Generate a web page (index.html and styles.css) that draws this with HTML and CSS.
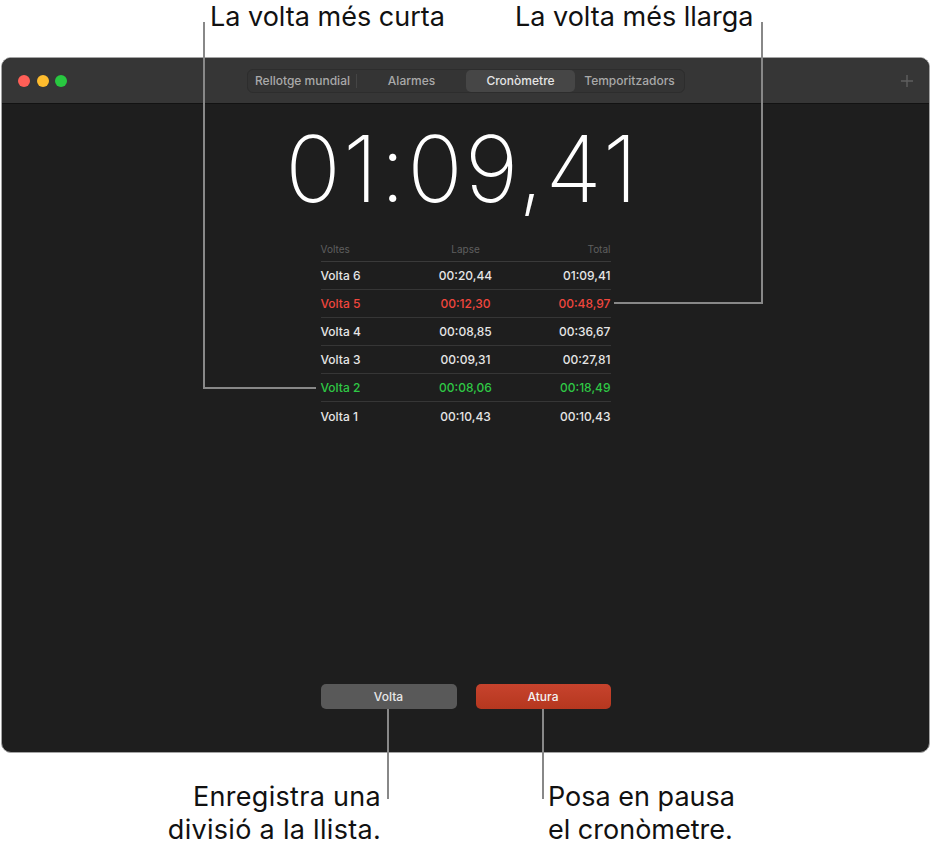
FILE: index.html
```html
<!DOCTYPE html>
<html lang="ca">
<head>
<meta charset="utf-8">
<title>Cronòmetre</title>
<link rel="stylesheet" href="styles.css">
</head>
<body>
<div class="stage">
  <div class="window">
    <header class="titlebar">
      <div class="lights">
        <span class="light red"></span>
        <span class="light yellow"></span>
        <span class="light green"></span>
      </div>
      <nav class="segmented">
        <span class="seg">Rellotge mundial</span>
        <span class="seg sep-after">Alarmes</span>
        <span class="seg active">Cronòmetre</span>
        <span class="seg">Temporitzadors</span>
      </nav>
      <div class="tools">
        <svg class="plus" width="14" height="14" viewBox="0 0 14 14"><path d="M7 1v12M1 7h12" stroke="#5f5f5f" stroke-width="1.4" fill="none"/></svg>
      </div>
    </header>
    <main class="content">
      <div class="time">01:09,41</div>
      <div class="laps">
        <div class="row head"><span>Voltes</span><span>Lapse</span><span>Total</span></div>
        <div class="row"><span>Volta 6</span><span>00:20,44</span><span>01:09,41</span></div>
        <div class="row longest"><span>Volta 5</span><span>00:12,30</span><span>00:48,97</span></div>
        <div class="row"><span>Volta 4</span><span>00:08,85</span><span>00:36,67</span></div>
        <div class="row"><span>Volta 3</span><span>00:09,31</span><span>00:27,81</span></div>
        <div class="row shortest"><span>Volta 2</span><span>00:08,06</span><span>00:18,49</span></div>
        <div class="row last"><span>Volta 1</span><span>00:10,43</span><span>00:10,43</span></div>
      </div>
      <div class="buttons">
        <button class="btn lap">Volta</button>
        <button class="btn stop">Atura</button>
      </div>
    </main>
  </div>

  <div class="label top-left">La volta més curta</div>
  <div class="label top-right">La volta més llarga</div>
  <div class="leader leader-short"></div>
  <div class="leader leader-long"></div>
  <div class="leader leader-lap"></div>
  <div class="leader leader-stop"></div>
  <div class="label bottom-left">Enregistra una<br>divisió a la llista.</div>
  <div class="label bottom-right">Posa en pausa<br>el cronòmetre.</div>
</div>
</body>
</html>
```

FILE: styles.css
```css
* { box-sizing: border-box; }
html, body { margin: 0; padding: 0; background: #ffffff; }
body { font-family: Inter, "Noto Sans", sans-serif; }

.stage {
  position: relative;
  width: 931px;
  height: 857px;
  overflow: hidden;
  padding-top: 57px;
  padding-left: 1px;
}

.window {
  width: 929px;
  height: 696px;
  border: 1px solid #a4a4a4;
  border-radius: 10px;
  overflow: hidden;
  background: #1e1e1e;
  display: flex;
  flex-direction: column;
}

.titlebar {
  height: 46px;
  flex: none;
  background: #363636;
  border-bottom: 1px solid #121212;
  display: grid;
  grid-template-columns: 1fr auto 1fr;
  align-items: center;
  padding: 0 15px 0 16px;
}

.lights { display: flex; gap: 6.5px; }
.light { width: 12px; height: 12px; border-radius: 50%; display: block; }
.red { background: #ff5f57; }
.yellow { background: #febc2e; }
.green { background: #28c840; }

.segmented {
  display: flex;
  width: 438px;
  height: 24px;
  border: 1px solid #2d2d2d;
  border-radius: 6px;
  background: #343434;
  padding: 0;
}
.seg {
  flex: 1;
  display: flex;
  align-items: center;
  justify-content: center;
  font-size: 12px;
  color: #a9a9a9;
  font-weight: 500;
  border-radius: 5px;
  position: relative;
}
.seg:first-child::after {
  content: "";
  position: absolute;
  right: 0;
  top: 4px;
  bottom: 4px;
  width: 1px;
  background: #454545;
}
.seg.active {
  background: #464646;
  color: #e4e4e4;
}

.tools { display: flex; justify-content: flex-end; }
.plus { display: block; }

.content {
  flex: 1;
  display: flex;
  flex-direction: column;
  align-items: center;
  padding: 19px 0 43px;
}

.time {
  font-size: 92px;
  line-height: 92px;
  height: 92px;
  font-weight: 200;
  color: #ffffff;
  letter-spacing: 2px;
  margin-right: 6px;
}

.laps {
  width: 290px;
  margin-top: 21px;
}
.row {
  display: grid;
  grid-template-columns: 1fr 1fr 1fr;
  height: 28px;
  align-items: center;
  border-bottom: 1px solid #363636;
  font-size: 12px;
  font-weight: 500;
  color: #e6e6e6;
}
.row span:nth-child(2) { text-align: center; }
.row span:nth-child(3) { text-align: right; }
.row.head {
  height: 26px;
  font-size: 10px;
  font-weight: 400;
  color: #5e5e5e;
  border-bottom-color: #3a3a3a;
}
.row.last { border-bottom: none; }
.row.longest { color: #f0463d; }
.row.shortest { color: #2fc845; }

.buttons {
  margin-top: auto;
  display: flex;
  gap: 19px;
}
.btn {
  height: 25px;
  border: none;
  border-radius: 5px;
  font-family: Inter, "Noto Sans", sans-serif;
  font-size: 12px;
  font-weight: 500;
  color: #e8e8e8;
  padding: 0;
}
.btn.lap { width: 136px; background: #595959; }
.btn.stop { width: 135px; background: linear-gradient(#c7432d, #b5371f); color: #f2f2f2; }

.label {
  position: absolute;
  font-family: Inter, "Noto Sans", sans-serif;
  font-size: 27px;
  line-height: 33px;
  color: #111111;
  white-space: nowrap;
}
.top-left { left: 210px; top: 0px; }
.top-right { left: 515px; top: 0px; }
.bottom-left { right: 550px; top: 780px; text-align: right; letter-spacing: 0.3px; }
.bottom-right { left: 548px; top: 780px; }

.leader { position: absolute; border: 0 solid #888888; }
.leader-short {
  left: 203px; top: 22px; width: 113px; height: 367px;
  border-left-width: 2px; border-bottom-width: 2px;
}
.leader-long {
  left: 614px; top: 22px; width: 149px; height: 282px;
  border-right-width: 2px; border-bottom-width: 2px;
}
.leader-lap { left: 387px; top: 709px; width: 2px; height: 90px; background: #888888; }
.leader-stop { left: 542px; top: 709px; width: 2px; height: 90px; background: #888888; }
```
